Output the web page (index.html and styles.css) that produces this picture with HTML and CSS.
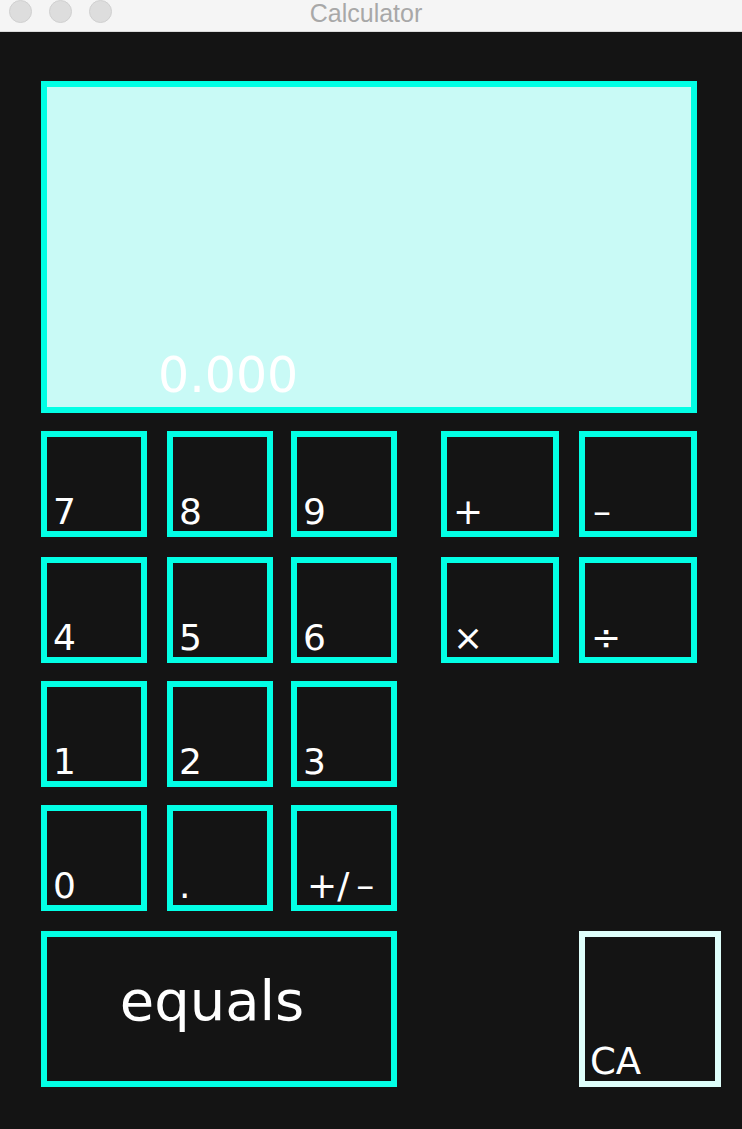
FILE: index.html
```html
<!DOCTYPE html>
<html>
<head>
<meta charset="utf-8">
<title>Calculator</title>
<link rel="stylesheet" href="styles.css">
</head>
<body>
<div class="titlebar">
  <div class="lights">
    <span class="light"></span>
    <span class="light"></span>
    <span class="light"></span>
  </div>
  <div class="title">Calculator</div>
  <div></div>
</div>
<main class="app">
  <div class="display"><span class="readout">0.000</span></div>
  <div class="keys">
    <div class="row row-first">
      <div class="digits">
        <div class="key">7</div>
        <div class="key">8</div>
        <div class="key">9</div>
      </div>
      <div class="ops">
        <div class="key op">+</div>
        <div class="key op"><span class="dash">–</span></div>
      </div>
    </div>
    <div class="row">
      <div class="digits">
        <div class="key">4</div>
        <div class="key">5</div>
        <div class="key">6</div>
      </div>
      <div class="ops">
        <div class="key op">×</div>
        <div class="key op">÷</div>
      </div>
    </div>
    <div class="row">
      <div class="digits">
        <div class="key">1</div>
        <div class="key">2</div>
        <div class="key">3</div>
      </div>
    </div>
    <div class="row row-last">
      <div class="digits">
        <div class="key">0</div>
        <div class="key">.</div>
        <div class="key sign">+/<span class="dash2">–</span></div>
      </div>
    </div>
    <div class="row bottom">
      <div class="key equals">equals</div>
      <div class="key clear">CA</div>
    </div>
  </div>
</main>
</body>
</html>
```

FILE: styles.css
```css
* {
  box-sizing: border-box;
}

html, body {
  margin: 0;
  padding: 0;
}

body {
  background: #141414;
  width: 742px;
  height: 1129px;
  overflow: hidden;
  font-family: "DejaVu Sans", "Liberation Sans", sans-serif;
}

.titlebar {
  height: 32px;
  background: #f5f5f5;
  border-bottom: 1px solid #dadada;
  display: grid;
  grid-template-columns: 1fr auto 1fr;
}

.lights {
  display: flex;
  gap: 17px;
  padding-left: 9px;
}

.light {
  width: 23px;
  height: 23px;
  border-radius: 50%;
  background: #dddddd;
  border: 1px solid #d0d0d0;
}

.title {
  font-family: "Liberation Sans", Arial, sans-serif;
  font-size: 25px;
  line-height: 27px;
  color: #a8a8a8;
  padding-right: 10px;
}

.app {
  padding: 49px 0 0 41px;
}

.display {
  width: 656px;
  height: 332px;
  border: 6px solid #02ffe5;
  background: #c9faf6;
  display: flex;
  align-items: flex-end;
  padding: 0 0 7px 111px;
}

.readout {
  color: #ffffff;
  font-size: 49px;
  line-height: 49px;
}

.keys {
  margin-top: 18px;
  display: flex;
  flex-direction: column;
  gap: 18px;
}

.row {
  display: flex;
}

.row-first {
  margin-bottom: 2px;
}

.row-last {
  margin-bottom: 2px;
}

.digits {
  display: flex;
  gap: 18px;
}

.digits .key:first-child {
  margin-right: 2px;
}

.ops {
  display: flex;
  gap: 20px;
  margin-left: 44px;
}

.key {
  width: 106px;
  height: 106px;
  border: 6px solid #02ffe5;
  color: #ffffff;
  font-size: 36px;
  line-height: 36px;
  display: flex;
  align-items: flex-end;
  padding: 0 0 1px 6px;
}

.op {
  width: 118px;
  padding-left: 6px;
}

.dash {
  margin-left: 2px;
}

.sign {
  padding-left: 10px;
}

.dash2 {
  margin-left: 7px;
}

.bottom {
  align-items: flex-start;
}

.equals {
  width: 356px;
  height: 156px;
  font-size: 56px;
  line-height: 56px;
  justify-content: center;
  align-items: flex-start;
  padding: 36px 14px 0 0;
}

.clear {
  width: 142px;
  height: 156px;
  margin-left: 182px;
  border-color: #dffffb;
  font-size: 37px;
  padding-left: 5px;
}
```
